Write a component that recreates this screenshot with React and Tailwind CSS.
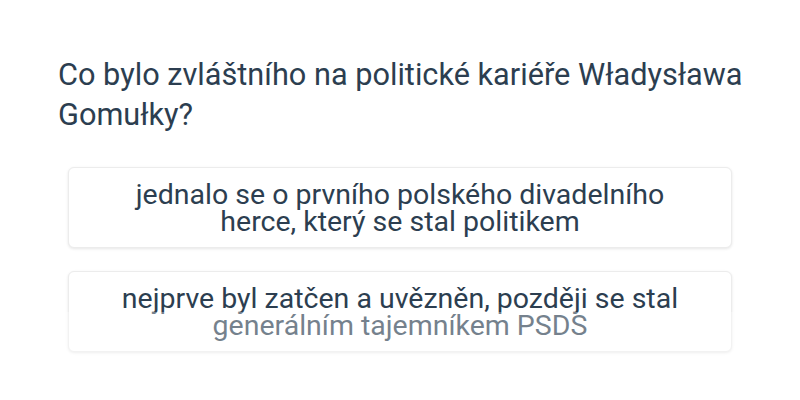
export default function App() {
  const answers = [
    'jednalo se o prvního polského divadelního herce, který se stal politikem',
    'nejprve byl zatčen a uvězněn, později se stal generálním tajemníkem PSDS',
  ];

  return (
    <div className="relative w-[800px] h-[400px] bg-white overflow-hidden font-['Roboto',sans-serif] text-[#2c3e50]">
      <div className="pl-[58px] pr-[30px] pt-[55px]">
        <h1 className="text-[30.7px] leading-[40px] font-normal">
          Co bylo zvláštního na politické kariéře Władysława Gomułky?
        </h1>
      </div>
      <div className="mt-[32px] mx-[68px] flex flex-col gap-[23px]">
        {answers.map((a) => (
          <div
            key={a}
            className="rounded-md bg-white border border-[#ececec] shadow-[0_1px_3px_rgba(0,0,0,0.1)] px-10 py-[12.5px] text-center text-[28.5px] leading-[27px]"
          >
            {a}
          </div>
        ))}
      </div>
      {/* fade over the bottom part */}
      <div className="absolute left-0 right-0 top-[312px] bottom-0 bg-white/35" />
    </div>
  );
}
